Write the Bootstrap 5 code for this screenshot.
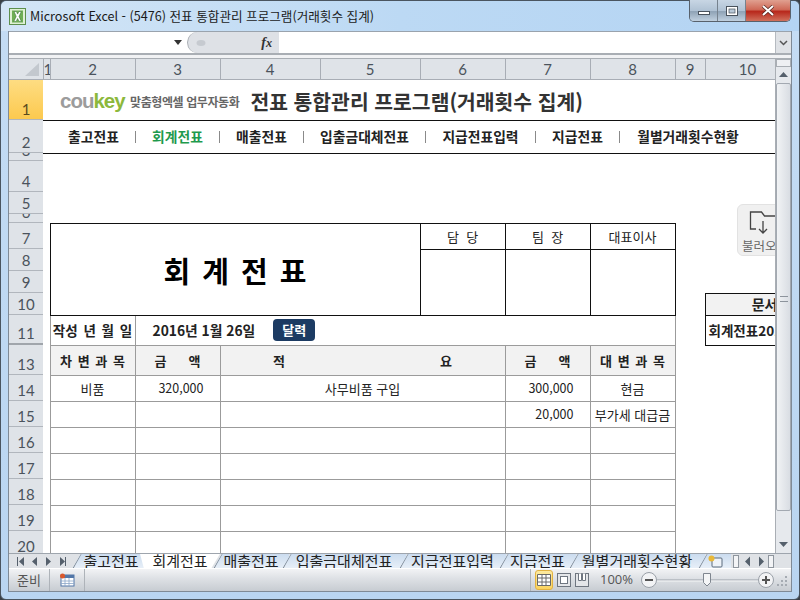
<!DOCTYPE html>
<html lang="ko">

<head>
    <meta charset="UTF-8">
    <meta name="viewport" content="width=device-width, initial-scale=1">
    <title>Microsoft Excel - (5476) 전표 통합관리 프로그램(거래횟수 집계)</title>
    <link href="https://cdn.jsdelivr.net/npm/bootstrap@5.3.0/dist/css/bootstrap.min.css" rel="stylesheet">

    <style>
        html,
        body {
            margin: 0;
            width: 800px;
            height: 600px;
            overflow: hidden;
            background: #3a4046;
        }

        body,
        table,
        button {
            font-family: "Noto Sans CJK KR", "Liberation Sans", sans-serif;
        }

        .xl-frame {
            width: 800px;
            height: 600px;
            border: 1px solid #4a5560;
            border-radius: 6px;
            background: linear-gradient(180deg, #b9d7f3 0, #c4dcf4 31px, #b9d5f1 100%);
        }

        .xl-title {
            height: 30px;
            padding-left: 8px;
            font-size: 12.6px;
            color: #1a1a1a;
            background: linear-gradient(90deg, #d3e5f6 0, #bcd9f4 50%, #b4d4f3 100%);
            border-radius: 6px 6px 0 0;
        }

        .xl-title svg {
            margin-right: 4px;
        }

        .xl-winbtns {
            position: absolute;
            top: -1px;
            right: 8px;
            height: 22px;
            border: 1px solid #58616c;
            border-top: 0;
            border-radius: 0 0 5px 5px;
            overflow: hidden;
        }

        .xl-winbtn {
            width: 28px;
            background: linear-gradient(180deg, #c8d6e4 0, #b0c2d4 50%, #8fa3b6 55%, #c0d0df 100%);
            border-right: 1px solid #76828e;
        }

        .xl-winbtn-close {
            width: 44px;
            border-right: 0;
            background: linear-gradient(180deg, #e0a090 0, #cf6a58 45%, #b8281c 55%, #d0705c 100%);
        }

        .xl-body {
            margin: 0 7px;
            height: 561px;
            border-left: 1px solid #7f8a96;
            border-right: 1px solid #7f8a96;
        }

        .xl-fbar {
            height: 24px;
            background: #fff;
            border-top: 1px solid #9aa3ad;
            border-bottom: 2px solid #a9aeb4;
        }

        .xl-namebox {
            width: 178px;
            padding-right: 5px;
        }

        .xl-fxzone {
            width: 92px;
            background: #dee1e6;
            border-radius: 12px 0 0 12px;
            border-left: 1px solid #a9aeb4;
            padding: 0 7px 0 8px;
            font-family: "Liberation Serif", serif;
            font-style: italic;
            font-weight: 700;
            font-size: 14px;
            color: #333;
        }

        .xl-fexpand {
            width: 16px;
            background: #dfe2e6;
            border-left: 1px solid #b5bac0;
        }

        .xl-gapline {
            height: 4px;
            background: #f1f2f4;
            border-bottom: 1px solid #a9aeb4;
        }

        .xl-work {
            height: 494px;
        }

        .xl-sheet {
            width: 766px;
            height: 494px;
            overflow: hidden;
            position: relative;
            background: #fff;
        }

        .xl-grid {
            table-layout: fixed;
            width: 841px;
            border-collapse: collapse;
            font-size: 13px;
            color: #222;
        }

        .xl-grid td,
        .xl-grid th {
            padding: 0;
            font-weight: 400;
        }

        .xl-grid .fw-bold,
        .xl-grid .xl-head,
        .xl-grid .xl-docno {
            font-weight: 700;
        }

        .xl-colhead th {
            height: 21px;
            background: #dfe3e8;
            border-right: 1px solid #a8adb5;
            border-bottom: 1px solid #a8adb5;
            text-align: center;
            font-family: Lato, "Liberation Sans", sans-serif;
            font-size: 15px;
            color: #4b535c;
            line-height: 1;
            overflow: hidden;
        }

        .xl-colhead th:last-child {
            border-right: 0;
        }

        .xl-rowlabel {
            box-sizing: border-box;
            overflow: hidden;
            background: #dfe3e8;
            border-bottom: 1px solid #b1b6bd;
            font-family: Lato, "Liberation Sans", sans-serif;
            font-size: 15px;
            line-height: 17px;
            color: #4b535c;
            padding-bottom: 1px;
        }

        .xl-rowlabel.is-sel {
            background: linear-gradient(180deg, #fedd82, #fcc94f);
            color: #5a4a1e;
        }

        .xl-rowlabel.is-cut {
            border-bottom: 2px solid #a0a5ab;
        }

        .rh-40 { height: 40px; }
        .rh-33 { height: 33px; }
        .rh-8 { height: 8px; }
        .rh-31 { height: 31px; }
        .rh-22 { height: 22px; }
        .rh-9 { height: 9px; }
        .rh-26 { height: 26px; }
        .rh-30 { height: 30px; }

        .xl-line-b {
            border-bottom: 1px solid #111;
        }

        .xl-brandrow {
            padding-top: 3px;
        }

        .xl-logo {
            margin-left: 17px;
            font-family: "Liberation Sans", sans-serif;
            font-size: 20.5px;
            font-weight: 700;
            letter-spacing: -1px;
            color: #9c9c9c;
            line-height: 1;
            width: 70px;
            flex: none;
        }

        .xl-logo b {
            color: #8cb83c;
        }

        .xl-slogan {
            font-size: 12px;
            font-weight: 700;
            letter-spacing: -.4px;
            color: #666;
        }

        .xl-apptitle {
            margin-left: 11px;
            font-size: 20.4px;
            font-weight: 700;
            color: #333;
        }

        .xl-menuitem {
            font-size: 13.8px;
            font-weight: 700;
            color: #222;
            text-align: center;
            white-space: nowrap;
        }

        .xl-menu-sep {
            width: 1px;
            height: 12px;
            background: #8a8a8a;
            flex: none;
        }

        .m-84 { width: 83px; }
        .m-122 { width: 121px; }
        .m-110 { width: 109px; }
        .m-136 { width: 136px; }
        .m-first { margin-left: 9px; }

        .xl-active {
            color: #1f9a4d;
        }

        .xl-box {
            border: 1px solid #111;
        }

        .xl-cell {
            border: 1px solid #9b9b9b;
            text-align: center;
            white-space: nowrap;
            overflow: hidden;
        }

        .xl-head {
            background: #f2f2f2;
            word-spacing: 2px;
        }

        .xl-docno-head {
            font-size: 14px;
        }

        .xl-formtitle {
            display: inline-block;
            padding-top: 3px;
            font-size: 29px;
            font-weight: 700;
            color: #000;
            word-spacing: 4px;
        }

        .xl-dateword {
            font-size: 13.5px;
            word-spacing: 2px;
        }

        .xl-date {
            padding-left: 17px;
            font-weight: 700;
            font-size: 13.8px;
            white-space: nowrap;
        }

        .xl-calbtn {
            margin-left: 18px;
            width: 42px;
            height: 22px;
            padding: 0;
            line-height: 20px;
            font-size: 13px;
            font-weight: 700;
            color: #fff;
            background: #1c3b63;
            border: 0;
            border-radius: 4px;
        }

        .xl-amt {
            text-align: right;
            padding-right: 16px !important;
            font-size: 12.5px;
        }

        .xl-gapwide {
            gap: 155px;
        }

        .xl-gapnarrow {
            gap: 22px;
        }

        .xl-docno {
            text-align: left;
            padding-left: 3px !important;
            font-size: 13.5px;
            white-space: nowrap;
        }

        .xl-loadbtn {
            position: absolute;
            left: 728px;
            top: 145px;
            width: 68px;
            height: 52px;
            background: #f0f0f0;
            border: 1px solid #e2e2e2;
            border-radius: 6px;
            font-size: 12.5px;
            color: #666;
            line-height: 1;
            padding: 5px 0 0 4px;
        }

        .xl-loadbtn svg {
            display: block;
            margin: 0 0 5px 7px;
        }

        .xl-vscroll {
            width: 16px;
            height: 494px;
            background: #e6e9ed;
            border-left: 1px solid #a9aeb4;
        }

        .xl-split {
            height: 8px;
            background: #eef0f3;
            border: 1px solid #a9aeb4;
        }

        .xl-sarrow {
            height: 16px;
            flex: none;
        }

        .xl-sthumb {
            height: 428px;
            flex: none;
            border: 1px solid #a3a9b1;
            background: linear-gradient(90deg, #f1f3f5, #d9dde3);
            border-radius: 2px;
        }

        .xl-sgrip {
            width: 8px;
            height: 6px;
            border-top: 1px solid #8d949c;
            border-bottom: 1px solid #8d949c;
            background: linear-gradient(#fff0 40%, #8d949c 40%, #8d949c 60%, #fff0 60%);
            margin: 212px auto 0;
        }

        .xl-tabs {
            height: 16px;
            background: #dfe2e6;
            border-top: 1px solid #9ea5ad;
            overflow: hidden;
        }

        .xl-tabnav {
            width: 63px;
            flex: none;
        }

        .xl-tabnav svg,
        .xl-tabscroll svg {
            display: block;
        }

        .xl-tab {
            position: relative;
            height: 15px;
            line-height: 14px;
            font-size: 15px;
            color: #222;
            text-align: center;
            white-space: nowrap;
            flex: none;
            background: linear-gradient(180deg, #cbdcef, #e9f0f8);
            clip-path: polygon(9px 0, 100% 0, 100% 100%, 0 100%);
            margin-right: -7px;
        }

        .xl-tab::before {
            content: "";
            position: absolute;
            left: 4px;
            top: -2px;
            width: 1px;
            height: 20px;
            background: #7f8b98;
            transform: rotate(29deg);
        }

        .xl-tab.is-on {
            background: #fff;
            z-index: 1;
            clip-path: polygon(0 0, 100% 0, calc(100% - 9px) 100%, 4px 100%);
        }

        .xl-tab.is-on::before {
            display: none;
        }

        .tab-71 { width: 78px; }
        .tab-75 { width: 80px; margin-left: -3px; }
        .tab-70 { width: 76px; }
        .tab-115 { width: 124px; }
        .tab-100 { width: 107px; }
        .tab-72 { width: 77px; }
        .tab-129 { width: 136px; }
        .tab-new { width: 33px; }

        .xl-tabscroll {
            width: 43px;
            flex: none;
            margin-left: auto;
            margin-right: 16px;
        }

        .xl-status {
            height: 24px;
            background: linear-gradient(180deg, #f2f3f5 0, #dfe2e6 40%, #c7ccd2 100%);
            border-top: 1px solid #fff;
            border-bottom: 1px solid #7f8a96;
            font-size: 13px;
            color: #555;
        }

        .xl-ready {
            width: 41px;
            padding-left: 8px;
            height: 22px;
            line-height: 22px;
            border-right: 1px solid #aeb3b9;
        }

        .xl-macro {
            width: 35px;
            height: 22px;
            border-right: 1px solid #aeb3b9;
        }

        .xl-viewbtns {
            margin-left: auto;
            border-left: 1px solid #aeb3b9;
            height: 22px;
            padding-left: 4px;
        }

        .xl-viewbtn {
            width: 14px;
            height: 18px;
            flex: none;
        }

        .xl-viewbtn.is-on {
            width: 18px;
            height: 20px;
            background: linear-gradient(180deg, #fdeaa0, #fbd35e);
            border: 1px solid #e3b341;
            border-radius: 3px;
        }

        .xl-zoompct {
            font-family: "Open Sans", sans-serif;
            font-size: 13px;
            color: #555;
            width: 44px;
            text-align: right;
        }

        .xl-grip {
            width: 17px;
            flex: none;
        }
    </style>
</head>

<body>

    <div class="xl-frame position-relative">
        <div class="xl-title d-flex align-items-center">
            <svg width="17" height="17" viewBox="0 0 17 17">
                <rect x=".5" y=".5" width="16" height="16" fill="#dff0d4" stroke="#5d8f4c"/>
                <rect x="3" y="2.5" width="11" height="12" fill="#6fae55"/>
                <path d="M5 3.5h2.4l1.2 2.6 1.300-2.600h2.400L10 8.400l2.400 5H10L8.600 10.500 7.200 13.400H4.800L7.200 8.400z" fill="#fff" stroke="#2c6b2a" stroke-width=".5"/>
            </svg>
            <span>Microsoft Excel - (5476) 전표 통합관리 프로그램(거래횟수 집계)</span>
        </div>

        <div class="xl-winbtns d-flex">
            <div class="xl-winbtn d-flex align-items-center justify-content-center">
                <svg width="12" height="8" viewBox="0 0 12 8"><rect x=".5" y="4.5" width="11" height="3" fill="#fff" stroke="#49525c"/></svg>
            </div>
            <div class="xl-winbtn d-flex align-items-center justify-content-center">
                <svg width="12" height="10" viewBox="0 0 12 10"><rect x=".5" y=".5" width="11" height="9" fill="#fff" stroke="#49525c"/><rect x="3" y="3" width="6" height="4" fill="#b9c9d8" stroke="#49525c" stroke-width=".7"/></svg>
            </div>
            <div class="xl-winbtn xl-winbtn-close d-flex align-items-center justify-content-center">
                <svg width="14" height="11" viewBox="0 0 14 11"><path d="M2 1l10 9M12 1L2 10" stroke="#5a2a24" stroke-width="3.5"/><path d="M2 1l10 9M12 1L2 10" stroke="#fff" stroke-width="2"/></svg>
            </div>
        </div>

        <div class="xl-body d-flex flex-column">
            <div class="xl-fbar d-flex">
                <div class="xl-namebox d-flex align-items-center justify-content-end">
                    <svg width="8" height="5" viewBox="0 0 8 5"><path d="M0 0h8L4 5z" fill="#333"/></svg>
                </div>
                <div class="xl-fxzone d-flex align-items-center justify-content-between">
                    <svg width="10" height="8" viewBox="0 0 10 8"><ellipse cx="5" cy="4" rx="4.5" ry="3" fill="#c6cad0"/></svg>
                    <span>f<small>x</small></span>
                </div>
                <div class="flex-grow-1"></div>
                <div class="xl-fexpand d-flex align-items-center justify-content-center">
                    <svg width="9" height="6" viewBox="0 0 9 6"><path d="M1 1l3.5 3.5L8 1" fill="none" stroke="#555" stroke-width="1.5"/></svg>
                </div>
            </div>
            <div class="xl-gapline"></div>

            <div class="xl-work d-flex">
                <div class="xl-sheet">
                    <table class="xl-grid">
                        <colgroup>
                            <col style="width:34px">
                            <col style="width:7px">
                            <col style="width:85px">
                            <col style="width:85px">
                            <col style="width:100px">
                            <col style="width:100px">
                            <col style="width:85px">
                            <col style="width:85px">
                            <col style="width:85px">
                            <col style="width:30px">
                            <col style="width:85px">
                            <col style="width:60px">
                        </colgroup>
                        <tr class="xl-colhead">
                            <th>
                                <div class="d-flex justify-content-end align-items-end pe-1">
                                    <svg width="15" height="15" viewBox="0 0 15 15"><path d="M15 1v13H1z" fill="#c3c8ce"/></svg>
                                </div>
                            </th>
                            <th>1</th><th>2</th><th>3</th><th>4</th><th>5</th><th>6</th><th>7</th><th>8</th><th>9</th><th>10</th><th></th>
                        </tr>
                        <tr>
                            <th><div class="xl-rowlabel is-sel rh-40 d-flex align-items-end justify-content-center">1</div></th>
                            <td colspan="11" class="xl-line-b">
                                <div class="d-flex align-items-center xl-brandrow">
                                    <span class="xl-logo">cou<b>key</b></span>
                                    <span class="xl-slogan">맞춤형엑셀 업무자동화</span>
                                    <span class="xl-apptitle">전표 통합관리 프로그램(거래횟수 집계)</span>
                                </div>
                            </td>
                        </tr>
                        <tr>
                            <th><div class="xl-rowlabel rh-33 d-flex align-items-end justify-content-center">2</div></th>
                            <td colspan="11" class="xl-line-b">
                                <div class="d-flex align-items-center">
                                    <span class="xl-menuitem m-84 m-first">출고전표</span><i class="xl-menu-sep"></i>
                                    <span class="xl-menuitem m-84 xl-active">회계전표</span><i class="xl-menu-sep"></i>
                                    <span class="xl-menuitem m-84">매출전표</span><i class="xl-menu-sep"></i>
                                    <span class="xl-menuitem m-122">입출금대체전표</span><i class="xl-menu-sep"></i>
                                    <span class="xl-menuitem m-110">지급전표입력</span><i class="xl-menu-sep"></i>
                                    <span class="xl-menuitem m-84">지급전표</span><i class="xl-menu-sep"></i>
                                    <span class="xl-menuitem m-136">월별거래횟수현황</span>
                                </div>
                            </td>
                        </tr>
                        <tr><th><div class="xl-rowlabel rh-8 d-flex align-items-end justify-content-center">3</div></th><td colspan="11"></td></tr>
                        <tr><th><div class="xl-rowlabel rh-31 d-flex align-items-end justify-content-center">4</div></th><td colspan="11"></td></tr>
                        <tr><th><div class="xl-rowlabel rh-22 d-flex align-items-end justify-content-center">5</div></th><td colspan="11"></td></tr>
                        <tr><th><div class="xl-rowlabel rh-9 d-flex align-items-end justify-content-center">6</div></th><td colspan="11"></td></tr>
                        <tr>
                            <th><div class="xl-rowlabel rh-26 d-flex align-items-end justify-content-center">7</div></th>
                            <td></td>
                            <td colspan="4" rowspan="4" class="xl-box text-center"><span class="xl-formtitle">회 계 전 표</span></td>
                            <td class="xl-box text-center">담 &nbsp;당</td>
                            <td class="xl-box text-center">팀 &nbsp;장</td>
                            <td class="xl-box text-center">대표이사</td>
                            <td colspan="3"></td>
                        </tr>
                        <tr>
                            <th><div class="xl-rowlabel rh-22 d-flex align-items-end justify-content-center">8</div></th>
                            <td></td>
                            <td rowspan="3" class="xl-box"></td>
                            <td rowspan="3" class="xl-box"></td>
                            <td rowspan="3" class="xl-box"></td>
                            <td colspan="3"></td>
                        </tr>
                        <tr>
                            <th><div class="xl-rowlabel rh-22 d-flex align-items-end justify-content-center">9</div></th>
                            <td></td>
                            <td colspan="3"></td>
                        </tr>
                        <tr>
                            <th><div class="xl-rowlabel rh-22 d-flex align-items-end justify-content-center">10</div></th>
                            <td></td>
                            <td></td>
                            <td colspan="2" class="xl-box xl-head xl-docno-head text-center">문서번호</td>
                        </tr>
                        <tr>
                            <th><div class="xl-rowlabel is-cut rh-30 d-flex align-items-end justify-content-center">11</div></th>
                            <td></td>
                            <td class="xl-cell fw-bold xl-dateword">작성 년 월 일</td>
                            <td colspan="6" class="xl-cell text-start">
                                <div class="d-flex align-items-center">
                                    <span class="xl-date">2016년 1월 26일</span>
                                    <button type="button" class="btn xl-calbtn">달력</button>
                                </div>
                            </td>
                            <td></td>
                            <td colspan="2" class="xl-box xl-docno">회계전표20160126-001</td>
                        </tr>
                        <tr>
                            <th><div class="xl-rowlabel rh-30 d-flex align-items-end justify-content-center">13</div></th>
                            <td></td>
                            <td class="xl-cell xl-head">차 변 과 목</td>
                            <td class="xl-cell xl-head"><div class="d-flex justify-content-center xl-gapnarrow"><span>금</span><span>액</span></div></td>
                            <td colspan="3" class="xl-cell xl-head"><div class="d-flex justify-content-center xl-gapwide"><span>적</span><span>요</span></div></td>
                            <td class="xl-cell xl-head"><div class="d-flex justify-content-center xl-gapnarrow"><span>금</span><span>액</span></div></td>
                            <td class="xl-cell xl-head">대 변 과 목</td>
                            <td colspan="3"></td>
                        </tr>
                        <tr>
                            <th><div class="xl-rowlabel rh-26 d-flex align-items-end justify-content-center">14</div></th>
                            <td></td>
                            <td class="xl-cell">비품</td>
                            <td class="xl-cell xl-amt">320,000</td>
                            <td colspan="3" class="xl-cell">사무비품 구입</td>
                            <td class="xl-cell xl-amt">300,000</td>
                            <td class="xl-cell">현금</td>
                            <td colspan="3"></td>
                        </tr>
                        <tr>
                            <th><div class="xl-rowlabel rh-26 d-flex align-items-end justify-content-center">15</div></th>
                            <td></td>
                            <td class="xl-cell"></td>
                            <td class="xl-cell"></td>
                            <td colspan="3" class="xl-cell"></td>
                            <td class="xl-cell xl-amt">20,000</td>
                            <td class="xl-cell">부가세 대급금</td>
                            <td colspan="3"></td>
                        </tr>
                        <tr><th><div class="xl-rowlabel rh-26 d-flex align-items-end justify-content-center">16</div></th><td></td><td class="xl-cell"></td><td class="xl-cell"></td><td colspan="3" class="xl-cell"></td><td class="xl-cell"></td><td class="xl-cell"></td><td colspan="3"></td></tr>
                        <tr><th><div class="xl-rowlabel rh-26 d-flex align-items-end justify-content-center">17</div></th><td></td><td class="xl-cell"></td><td class="xl-cell"></td><td colspan="3" class="xl-cell"></td><td class="xl-cell"></td><td class="xl-cell"></td><td colspan="3"></td></tr>
                        <tr><th><div class="xl-rowlabel rh-26 d-flex align-items-end justify-content-center">18</div></th><td></td><td class="xl-cell"></td><td class="xl-cell"></td><td colspan="3" class="xl-cell"></td><td class="xl-cell"></td><td class="xl-cell"></td><td colspan="3"></td></tr>
                        <tr><th><div class="xl-rowlabel rh-26 d-flex align-items-end justify-content-center">19</div></th><td></td><td class="xl-cell"></td><td class="xl-cell"></td><td colspan="3" class="xl-cell"></td><td class="xl-cell"></td><td class="xl-cell"></td><td colspan="3"></td></tr>
                        <tr><th><div class="xl-rowlabel rh-26 d-flex align-items-end justify-content-center">20</div></th><td></td><td class="xl-cell"></td><td class="xl-cell"></td><td colspan="3" class="xl-cell"></td><td class="xl-cell"></td><td class="xl-cell"></td><td colspan="3"></td></tr>
                    </table>

                    <div class="xl-loadbtn">
                        <svg width="40" height="25" viewBox="0 0 40 25">
                            <path d="M7 19H1.500V2h11l3 4h20v13H30" fill="none" stroke="#444" stroke-width="1.300"/>
                            <path d="M14 11v12M10 19l4 4 4-4" fill="none" stroke="#444" stroke-width="1.300"/>
                        </svg>
                        불러오기
                    </div>
                </div>

                <div class="xl-vscroll d-flex flex-column">
                    <div class="xl-split"></div>
                    <div class="xl-sarrow d-flex align-items-center justify-content-center">
                        <svg width="9" height="5" viewBox="0 0 9 5"><path d="M4.500 0L9 5H0z" fill="#55606c"/></svg>
                    </div>
                    <div class="xl-sthumb"><div class="xl-sgrip"></div></div>
                    <div class="flex-grow-1"></div>
                    <div class="xl-sarrow d-flex align-items-center justify-content-center">
                        <svg width="9" height="5" viewBox="0 0 9 5"><path d="M0 0h9L4.500 5z" fill="#55606c"/></svg>
                    </div>
                </div>
            </div>

            <div class="xl-tabs d-flex">
                <div class="xl-tabnav">
                    <svg width="63" height="15" viewBox="0 0 63 15" fill="#55606c">
                        <path d="M8 3h1v9H8zM15 3v9l-5-4.500zM28 3v9l-5-4.500zM37 3l5 4.500-5 4.500zM51 3l5 4.500-5 4.500zM56 3h1v9h-1z"/>
                    </svg>
                </div>
                <div class="xl-tab tab-71">출고전표</div>
                <div class="xl-tab is-on tab-75">회계전표</div>
                <div class="xl-tab tab-70">매출전표</div>
                <div class="xl-tab tab-115">입출금대체전표</div>
                <div class="xl-tab tab-100">지급전표입력</div>
                <div class="xl-tab tab-72">지급전표</div>
                <div class="xl-tab tab-129">월별거래횟수현황</div>
                <div class="xl-tab tab-new d-flex align-items-center justify-content-center">
                    <svg width="16" height="14" viewBox="0 0 16 14"><rect x="5" y="4" width="10" height="9" rx="1" fill="#eef3f9" stroke="#5b6b7c"/><circle cx="4.500" cy="4.500" r="3" fill="#e8b83a"/></svg>
                </div>
                <div class="xl-tabscroll">
                    <svg width="43" height="15" viewBox="0 0 43 15">
                        <rect x="1.500" y="1.500" width="5" height="12" fill="#f3f4f6" stroke="#8f969e"/>
                        <path d="M18 2.500v10l-5-5zM27 2.500l5 5-5 5z" fill="#55606c"/>
                        <rect x="36.500" y="1.500" width="5" height="12" fill="#f3f4f6" stroke="#8f969e"/>
                    </svg>
                </div>
            </div>

            <div class="xl-status d-flex align-items-center">
                <div class="xl-ready">준비</div>
                <div class="xl-macro d-flex align-items-center justify-content-center">
                    <svg width="16" height="14" viewBox="0 0 16 14"><rect x="2" y="2" width="13" height="11" fill="#fff" stroke="#5277a8"/><rect x="2" y="2" width="13" height="3" fill="#5277a8"/><path d="M6 5v8M10 5v8M2 8h13M2 10.500h13" stroke="#8aa6c8" stroke-width=".8"/><circle cx="3.500" cy="3" r="2.500" fill="#d9582c"/></svg>
                </div>
                <div class="xl-viewbtns d-flex align-items-center gap-1">
                    <div class="xl-viewbtn is-on d-flex align-items-center justify-content-center">
                        <svg width="14" height="12" viewBox="0 0 14 12"><path d="M.5.5h13v11H.500zM.5 4h13M.5 8h13M5 .5v11M9 .5v11" fill="#fff" stroke="#6a6a6a"/></svg>
                    </div>
                    <div class="xl-viewbtn d-flex align-items-center justify-content-center">
                        <svg width="14" height="14" viewBox="0 0 14 14"><rect x=".5" y=".5" width="13" height="13" fill="#e4e6e9" stroke="#6f7680"/><rect x="3.500" y="3.500" width="7" height="7" fill="#fff" stroke="#6f7680"/></svg>
                    </div>
                    <div class="xl-viewbtn d-flex align-items-center justify-content-center">
                        <svg width="14" height="14" viewBox="0 0 14 14"><rect x=".5" y=".5" width="13" height="13" fill="#e4e6e9" stroke="#6f7680"/><path d="M3.500 .5v7h3v-7M7.500 .5v7h3v-7" fill="#fff" stroke="#6f7680"/></svg>
                    </div>
                </div>
                <div class="xl-zoompct">100%</div>
                <svg class="ms-2" width="133" height="22" viewBox="0 0 133 22">
                    <line x1="16" y1="11" x2="118" y2="11" stroke="#9aa0a8"/>
                    <line x1="16" y1="12" x2="118" y2="12" stroke="#f4f5f6"/>
                    <circle cx="8" cy="11" r="7.500" fill="#f2f3f5" stroke="#9aa0a8"/>
                    <rect x="4" y="10" width="8" height="2" fill="#555"/>
                    <circle cx="125" cy="11" r="7.500" fill="#f2f3f5" stroke="#9aa0a8"/>
                    <path d="M121 10h3V7h2v3h3v2h-3v3h-2v-3h-3z" fill="#555"/>
                    <path d="M62.500 4.500h7v9L66 17l-3.500-3.500z" fill="#f4f5f6" stroke="#7f868f"/>
                </svg>
                <div class="xl-grip d-flex justify-content-end align-items-end pe-1">
                    <svg width="10" height="14" viewBox="0 0 10 14" fill="#a5abb2"><rect x="8" y="3" width="2" height="2"/><rect x="4" y="7" width="2" height="2"/><rect x="8" y="7" width="2" height="2"/><rect x="0" y="11" width="2" height="2"/><rect x="4" y="11" width="2" height="2"/><rect x="8" y="11" width="2" height="2"/></svg>
                </div>
            </div>
        </div>
    </div>

    <script src="https://cdn.jsdelivr.net/npm/bootstrap@5.3.0/dist/js/bootstrap.bundle.min.js"></script>

</body>

</html>
